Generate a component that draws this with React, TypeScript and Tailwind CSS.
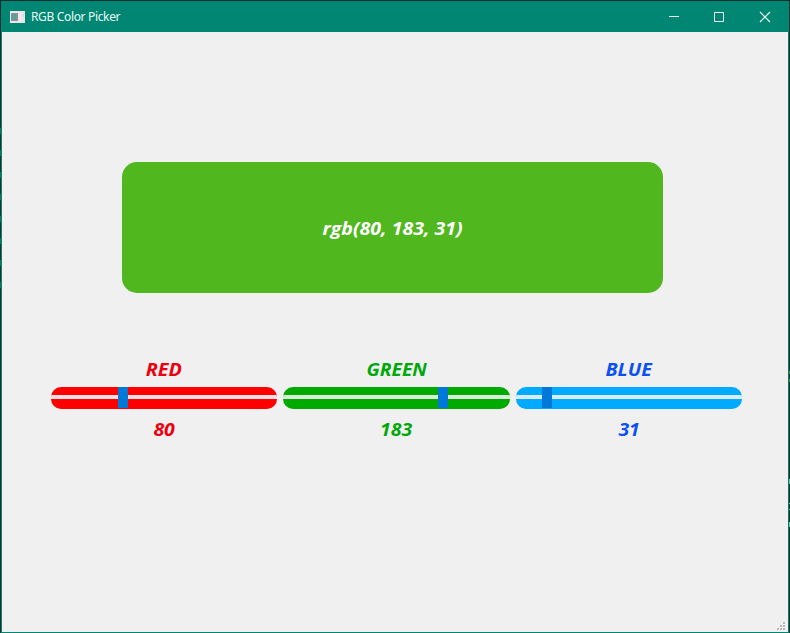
type ChannelProps = {
  name: string;
  value: number;
  text: string;
  bar: string;
  groove: string;
  width: string;
  handle: string;
  nameScale: string;
};

const channels: ChannelProps[] = [
  { name: "RED", value: 80, text: "text-[#ec0010]", bar: "bg-[#ff0000]", groove: "bg-[#f3dfe3]", width: "w-[226px]", handle: "ml-[67px]", nameScale: "scale-x-[1.08]" },
  { name: "GREEN", value: 183, text: "text-[#00a80c]", bar: "bg-[#00aa00]", groove: "bg-[#d9ecd9]", width: "w-[227px]", handle: "ml-[155px]", nameScale: "scale-x-[1.05]" },
  { name: "BLUE", value: 31, text: "text-[#0b50f0]", bar: "bg-[#00aaff]", groove: "bg-[#d9ecf5]", width: "w-[226px]", handle: "ml-[26px]", nameScale: "scale-x-[1.07]" },
];

function Channel({ name, value, text, bar, groove, width, handle, nameScale }: ChannelProps) {
  return (
    <div className={`flex flex-col items-center ${width}`}>
      <div className={`h-[31px] text-[18.3px] leading-[25px] font-bold italic ${text} ${nameScale}`}>{name}</div>
      <div className={`relative flex h-[22px] w-full items-center overflow-hidden rounded-[10px] ${bar}`}>
        <div className={`-mt-0.5 h-1 w-full ${groove}`} />
        <div className="absolute inset-0">
          <div className={`h-[21px] w-[10px] bg-[#0078d7] ${handle}`} />
        </div>
      </div>
      <div className={`mt-[7px] scale-x-[1.06] text-[18.3px] leading-[25px] font-bold italic ${text}`}>{value}</div>
    </div>
  );
}

export default function App() {
  return (
    <div className="relative flex h-[633px] w-[790px] flex-col border-t border-r border-l border-[#0b2f30] bg-[#008672] font-['Open_Sans','Noto_Sans',sans-serif]">
      <header className="flex h-[31px] shrink-0 items-center text-[#e8fbf7]">
        <svg className="ml-[9px] h-3 w-[15px]" viewBox="0 0 15 12" shapeRendering="crispEdges">
          <rect width="15" height="12" fill="#e9e7e9" />
          <rect x="1" y="2" width="7" height="8" fill="#87939a" />
          <rect x="2" y="3" width="4" height="6" fill="#679a93" />
          <rect x="9" y="2" width="3" height="8" fill="#f5e9ee" />
          <rect x="12" y="3" width="2" height="3" fill="#cfe3df" />
        </svg>
        <span className="ml-[6px] font-['Noto_Sans',sans-serif] text-[12px] leading-4 tracking-[-0.34px]">RGB Color Picker</span>
        <svg className="mr-[17px] ml-auto h-[12px] w-[104px]" viewBox="0 0 104 12" fill="none" stroke="#e8fbf7">
          <path d="M1 5.500h10M46.500 1.500h9v9h-9z" />
          <path d="m92 1 10 10m0-10-10 10" strokeWidth="1.2" />
        </svg>
      </header>
      <main className="mb-[1px] ml-[1px] flex flex-1 flex-col border-r border-[#087c6b] bg-[#f0f0f0]">
        <div className="mt-[130px] ml-[120px] flex h-[131px] w-[541px] items-center justify-center rounded-[15px] bg-[#50b71f] pt-px text-[18.3px] font-bold text-white italic">
          <span className="scale-x-[1.067]">rgb(80, 183, 31)</span>
        </div>
        <div className="mt-[63px] ml-[49px] flex gap-[6px]">
          {channels.map((c) => (
            <Channel key={c.name} {...c} />
          ))}
        </div>
        <svg className="mt-auto mr-[3px] mb-[2px] ml-auto h-2 w-2" viewBox="0 0 8 8" fill="#b9b9b9" shapeRendering="crispEdges">
          <path d="M6 0h2v2H6zM3 3h2v2H3zM6 3h2v2H6zM0 6h2v2H0zM3 6h2v2H3zM6 6h2v2H6z" />
        </svg>
      </main>
      {/* Desktop content peeking out along the window's edges */}
      <svg className="pointer-events-none absolute -top-px -left-px h-[633px] w-[790px]" viewBox="0 0 790 633" shapeRendering="crispEdges">
        <path fill="#23704c" d="M0 128h1v6H0zM0 150h1v6H0zM0 172h1v6H0zM0 194h1v6H0zM0 216h1v6H0zM0 238h1v6H0zM0 260h1v6H0zM0 282h1v6H0z" />
        <path fill="#5c7a50" d="M789 371h1v3h-1zM789 379h1v3h-1z" />
        <path fill="#7fbdb0" d="M789 479h1v5h-1zM789 503h1v1h-1zM789 509h1v1h-1zM789 522h1v5h-1z" />
      </svg>
    </div>
  );
}
